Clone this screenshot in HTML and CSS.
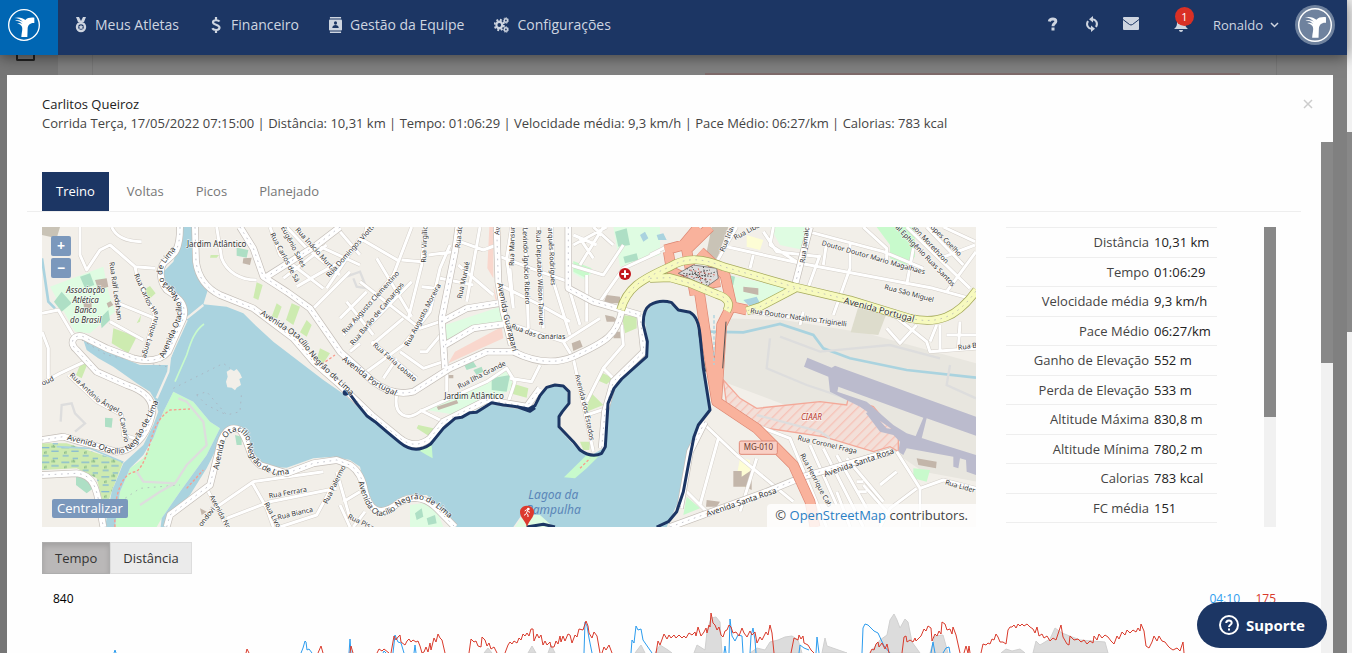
FILE: index.html
```html
<!DOCTYPE html>
<html lang="pt-BR">
<head>
  <meta charset="UTF-8" />
  <meta name="viewport" content="width=device-width, initial-scale=1.0" />
  <title>Treino - Carlitos Queiroz</title>
  <link rel="stylesheet" href="styles.css">
</head>
<body>
  <svg class="defs" width="0" height="0" aria-hidden="true">
    <symbol id="logo" viewBox="0 0 96 96">
      <circle cx="48" cy="48" r="46" fill="none" stroke="currentColor" stroke-width="4"/>
      <path fill="currentColor" d="M40 84C41 68 46 57 40 50C36 46 31 43 26 42C33 41 38 42 43 45C37 38 31 35 21 35C29 32 38 34 45 39C38 31 30 27 19 27C33 23 44 27 52 33C58 27 66 25 79 26V42C66 41 60 48 59 58L58 84Z"/>
    </symbol>
  </svg>

  <div class="page">
    <div class="screen">
      <header class="topbar">
        <a href="#" class="brand" aria-label="Início"><svg width="32" height="32"><use href="#logo"/></svg></a>
        <nav class="menu">
          <a href="#">
            <svg width="12" height="16" viewBox="0 0 12 16"><path fill="currentColor" d="M1 0h3l2 4 2-4h3L9 5H3z"/><circle cx="6" cy="10" r="4" fill="none" stroke="currentColor" stroke-width="2.400"/><path fill="currentColor" d="M6 7.500l.8 1.700 1.900.2-1.400 1.200.4 1.900L6 11.600l-1.700.9.4-1.900-1.400-1.200 1.900-.2z"/></svg>
            Meus Atletas</a>
          <a href="#">
            <svg width="14" height="16" viewBox="0 0 14 16"><path fill="none" stroke="currentColor" stroke-width="2.200" d="M10.500 4.500C9.500 3 4 2.400 4 5.300C4 8.200 10.500 7.200 10.500 10.600C10.500 13.800 4.500 13.500 3.300 11.300M7 0v3M7 13v3"/></svg>
            Financeiro</a>
          <a href="#">
            <svg width="13" height="16" viewBox="0 0 14 16" preserveAspectRatio="none"><path fill="currentColor" d="M1 0h12v1.500H1zM1 14.500h12V16H1z"/><rect y="2.500" width="14" height="11" rx="1" fill="currentColor"/><circle cx="7" cy="6" r="1.700" fill="#1c3664"/><path fill="#1c3664" d="M3.500 11c0-4 7-4 7 0z"/></svg>
            Gestão da Equipe</a>
          <a href="#">
            <svg width="15" height="16" viewBox="0 0 17 16" preserveAspectRatio="none"><g fill="none" stroke="currentColor"><circle cx="6" cy="8" r="3.300" stroke-width="2.400"/><circle cx="6" cy="8" r="5.200" stroke-width="2" stroke-dasharray="2.100 2"/><circle cx="13.500" cy="3.500" r="1.800" stroke-width="1.600"/><circle cx="13.500" cy="3.500" r="2.900" stroke-width="1" stroke-dasharray="1.300 1.300"/><circle cx="13.500" cy="12.500" r="1.800" stroke-width="1.600"/><circle cx="13.500" cy="12.500" r="2.900" stroke-width="1" stroke-dasharray="1.300 1.300"/></g></svg>
            Configurações</a>
        </nav>
        <div class="tools">
          <button type="button" aria-label="Ajuda"><svg width="16" height="16" viewBox="0 0 16 16"><path fill="none" stroke="currentColor" stroke-width="3" d="M4.300 5.500C5 2.200 11 2.200 10.800 5.300C10.700 7.500 8 7.300 8 10.200M8 11.500v3"/></svg></button>
          <button type="button" aria-label="Atualizar"><svg width="16" height="16" viewBox="0 0 16 16"><g fill="none" stroke="currentColor" stroke-width="2"><path d="M8 3.200C11.500 3 14.500 7 12 11"/><path d="M8 12.800C4.500 13 1.500 9 4 5"/></g><path fill="currentColor" d="M9 0v6.500L5 3.200zM7 16V9.500l4 3.300z"/></svg></button>
          <button type="button" aria-label="Mensagens"><svg width="16" height="13" viewBox="0 0 16 13"><rect width="16" height="13" rx="1" fill="currentColor"/><path fill="none" stroke="#1c3664" d="M0 2.500l6.500 5q1.500 1 3 0l6.500-5"/></svg></button>
          <button type="button" class="bell" aria-label="Notificações"><svg width="14" height="16" viewBox="0 0 14 16"><path fill="currentColor" d="M7 1c3.500 0 4 2.500 4 6 0 3 1 4 3 6H0c2-2 3-3 3-6 0-3.500.5-6 4-6zM5 14h4c0 2.500-4 2.500-4 0z"/></svg><span class="badge">1</span></button>
        </div>
        <button type="button" class="user">Ronaldo <svg width="9" height="6" viewBox="0 0 9 6"><path fill="none" stroke="currentColor" stroke-width="1.500" d="M1 1l3.500 3.500L8 1"/></svg></button>
        <span class="avatar"><svg width="34" height="34"><use href="#logo"/></svg></span>
      </header>

      <main class="backdrop">
        <div class="under-sidebar"></div>
        <div class="under-card"></div>
        <section class="modal" role="dialog" aria-labelledby="athlete">
          <div class="modal-header">
            <div>
              <h1 id="athlete">Carlitos Queiroz</h1>
              <p>Corrida Terça, 17/05/2022 07:15:00 | Distância: 10,31 km | Tempo: 01:06:29 | Velocidade média: 9,3 km/h | Pace Médio: 06:27/km | Calorias: 783 kcal</p>
            </div>
            <button type="button" class="close" aria-label="Fechar"><svg width="10" height="10" viewBox="0 0 10 10"><path stroke="currentColor" stroke-width="1.500" d="M1 1l8 8M9 1L1 9"/></svg></button>
          </div>

          <div class="modal-body">
            <div class="content">
              <nav class="tabs">
                <a href="#" class="active">Treino</a>
                <a href="#">Voltas</a>
                <a href="#">Picos</a>
                <a href="#">Planejado</a>
              </nav>

              <div class="overview">
                <div class="map">
                  <svg class="map-tiles" viewBox="6 6 2802 900" preserveAspectRatio="xMidYMid slice" role="img" aria-label="Mapa do percurso">
                    <defs>
                      <pattern id="marsh" width="60" height="44" patternUnits="userSpaceOnUse">
                        <rect width="60" height="44" fill="#cdeab0"/>
                        <path stroke="#6ba8e0" stroke-width="3" d="M4 8h24M34 18h22M8 32h18M38 40h16"/>
                        <path stroke="#5c9a70" stroke-width="2" fill="none" d="M36 8v-6M40 8V0M44 8v-6M14 26v-6M18 26v-8"/>
                      </pattern>
                      <pattern id="military" width="20" height="20" patternUnits="userSpaceOnUse" patternTransform="rotate(45)">
                        <rect width="20" height="20" fill="#f3dfd8"/>
                        <path stroke="#f6c3b8" stroke-width="4" d="M2 0v20"/>
                      </pattern>
                      <g id="streets">
                        <path d="M120 6V90L140 135L180 75L210 60L245 90L285 125L345 130M285 125L290 150L320 220L345 270L308 400M235 235L345 280M210 290L310 345M215 6C230 40 270 50 305 50M6 265L55 255L105 340M6 475L60 445L135 410M6 320L25 370V460M85 450L170 530L245 570L250 630L285 640M530 6L545 100C560 140 600 165 650 165M690 6L720 90L850 190M740 6L800 70L900 150M680 155L830 60L880 20M860 190L960 40M730 160L860 60M770 185L900 110M910 330L960 270M930 380L960 355M830 60L960 120M820 250L930 140"/>
                        <path d="M500 790L560 906M510 860L640 770L850 740M635 770L680 850L700 906M560 880L690 830L890 790M720 906L830 870L890 760M890 740L930 880M910 830L960 800"/>
                        <path transform="translate(900)" d="M0 120L75 30L80 6M10 330L160 150L215 6M30 360L215 170M60 40L180 110M20 230L100 330M60 170L240 310L300 290M110 100L215 275M185 105L245 110M205 280L245 120L255 6M190 360L270 260L300 130L330 60M95 360L190 280M80 440L190 360M95 350L230 460M130 460L170 400M180 380L250 430L310 410M265 90L340 80M360 50L430 75L470 60M300 160L400 180M420 6L380 230M355 120L460 210M0 20L60 90M0 280L80 200M245 185L285 190M310 320L260 380L240 380"/>
                        <path transform="translate(900)" d="M515 6L500 100L520 250M555 6L565 310M595 6L610 310M635 6L640 170L690 330M480 95L600 140L685 170M480 180L600 240L690 290M520 300L670 350L780 280M670 350L700 400L760 680M690 120L790 150L850 60M700 60L800 6M740 150V290M790 6L720 120M720 40L760 100M780 230L850 130L960 80M600 420L575 470L510 460M845 300L850 360L790 430L830 470M790 430L740 530M740 570L800 550M170 510C160 570 200 590 240 560L440 470L500 430L525 470L505 530M240 555L310 590M320 440V500M510 130L520 250M760 6L820 60M700 30L770 60M690 200L720 300"/>
                        <path transform="translate(900)" d="M0 840L30 906M40 906L75 860"/>
                        <path transform="translate(1830)" d="M0 90L60 60M230 65L450 115L850 190L960 220M370 6L360 60L440 110M340 20L380 80L510 95M475 20L700 80L820 130M530 50L520 120M600 50V130L550 270M200 110L260 6M300 130L310 90M450 300L460 260M640 6L710 70V110M770 6L960 190M830 6L940 120M880 6L975 50M790 70L770 180M870 100L975 60M890 200L978 80M710 310L750 355L800 300M730 270L830 350L840 380L978 370M860 300L840 350M870 300V375M930 290L925 375M890 330H978M300 262L580 295M510 90L470 200"/>
                        <path transform="translate(1830)" d="M165 600L260 690M205 640L150 840M260 690L430 830M320 700L270 860M315 600L420 640L530 906M110 800L170 860M480 660L560 840M520 670L640 906M560 690L650 850M590 700L700 830M640 780L720 870M620 770H640M620 800H650M690 780L740 740M740 680L810 790V906M810 790L880 765L978 790M800 790L720 850L690 906M600 906L560 800"/>
                      </g>
                      <g id="avenues">
                        <path d="M420 6C420 80 400 90 375 110C355 130 360 170 380 195C420 220 440 240 430 280L385 380C360 410 320 410 280 400L200 370L130 335C100 325 85 355 110 375L170 440L260 480C320 500 345 530 335 570C320 640 270 680 230 680L120 650L70 635L6 645"/>
                        <path d="M465 6L468 110C475 160 500 190 540 210L640 250L760 340L820 410L900 480L1000 575L1080 640Q1125 675 1170 640L1210 590L1340 525L1460 545L1500 490"/>
                        <path d="M600 6L640 70L670 155L740 200L810 250L900 380L1000 470Q1060 515 1120 500L1230 430L1340 380L1420 380C1500 420 1560 412 1600 395C1700 350 1730 330 1745 260M900 6L830 60L680 155"/>
                        <path d="M6 750L110 745C160 750 170 790 180 850L190 906M380 906L390 870L510 780L535 680C545 620 570 600 600 615C630 650 620 690 660 720L740 745L820 715L890 705L930 720C960 740 970 770 975 800C990 860 1020 870 1060 845C1100 810 1150 810 1190 850L1245 906"/>
                        <path transform="translate(900)" d="M470 6L475 170L490 260L515 360M355 6L345 80L305 280L315 430M305 290L380 250L475 235M685 6V190L760 230L900 270M315 360L400 310L490 298M900 270L912 380L820 470L795 560L785 670"/>
                        <path transform="translate(1830)" d="M60 906L350 800L460 755L720 680M435 180L480 6M165 590L120 680L90 850"/>
                      </g>
                      <g id="yellow">
                        <path d="M1742 255C1760 190 1800 165 1890 125C1940 95 1990 100 2050 125L2260 185L2430 225L2610 280C2690 298 2750 280 2810 195M1830 160L1890 158L1950 175L2030 208C2070 220 2070 240 2060 258M2265 190L2160 245L2120 258"/>
                      </g>
                      <g id="highway">
                        <path d="M1978 200L2005 380L2030 530L2150 610L2260 720L2310 830L2325 906M2010 6L1940 75L1965 210M1875 75L1930 60L1975 6M1980 80L2055 150L2075 240L2045 300L2030 530M2075 245L2120 255M1885 80L1895 140L1980 180L2040 170"/>
                      </g>
                      <path id="l1" d="M372 400L420 290C440 230 400 190 375 170C355 130 380 110 395 90L430 40"/>
                      <path id="l2" d="M660 268L770 340L830 415L920 500L980 560"/>
                      <path id="l3" d="M80 644L170 668C230 700 270 690 300 640L345 555L370 490"/>
                      <path id="l4" d="M535 735L550 665C560 610 610 605 620 650C625 710 650 730 710 752L790 740"/>
                      <path id="l5" d="M88 452L170 530L235 565L250 625L255 680"/>
                      <path id="l6" d="M282 150L320 235L345 270L312 375L300 430"/>
                      <path id="l7" d="M905 405L1000 480L1080 520L1140 530"/>
                      <path id="l8" d="M955 770C980 870 1010 890 1060 860C1110 810 1150 810 1210 865L1260 910"/>
                      <path id="l9" d="M1412 310L1500 342L1620 342"/>
                      <path id="l10" d="M1372 175L1390 270L1430 430"/>
                      <path id="l11" d="M1605 450L1630 550L1665 720"/>
                    </defs>

                    <!-- land use -->
                    <rect x="6" y="6" width="2802" height="900" fill="#f2efe9"/>
                    <path fill="#e8e6df" d="M2050 280L2230 285L2480 325L2810 415V770L2650 740L2500 640L2050 470Z"/>
                    <path fill="#c9c3b6" d="M6 6H60L50 40L6 30ZM2015 6H2065L2030 105L2000 80Z"/>
                    <path fill="#dffce2" d="M30 185L190 125L205 200L225 260L150 325L105 320ZM1215 300L1380 245L1390 290L1300 320L1220 355ZM1160 555L1380 450L1410 430L1420 490L1250 570ZM1720 6H1860V90L1740 125ZM1600 110L1660 140L1635 165L1600 145ZM2060 150L2250 190L2150 240L2085 230ZM2190 6H2310L2290 75L2220 60ZM1110 840L1180 830L1210 906H1110ZM1425 906L1450 870L1510 870L1540 906Z"/>
                    <path fill="#c8facc" d="M400 500L460 530L510 590L540 610L500 690L420 800L365 880L350 906L225 906L240 800L270 730L310 700L340 640L370 560ZM2510 6H2625V95L2600 120L2550 100V60ZM1600 108L1655 130L1640 160L1600 140ZM2620 730L2670 735L2660 770L2620 760ZM1930 870L1940 815L1980 850Z"/>
                    <path fill="url(#marsh)" d="M6 655L80 655L250 710L215 800L195 860L170 760L110 730L6 735Z"/>
                    <path fill="#cdebb0" d="M220 310L290 335L265 385L215 355ZM310 195L330 183L347 205L325 225ZM120 420L145 410L125 460L108 450ZM650 172L668 180L655 225L640 218ZM710 235L725 245L712 280L695 275ZM755 235L780 245L760 300L738 285ZM800 285L815 300L800 335L780 322ZM840 370L870 385L850 415L828 410ZM512 90H537L530 98H510ZM290 295L303 270L300 290ZM1135 600L1180 610L1170 635L1130 610ZM1415 475L1465 490L1460 518L1410 505ZM1680 440L1720 460L1700 478L1670 465ZM1650 500L1690 540L1640 560ZM1745 270L1790 275L1790 310L1755 325ZM1620 650H1650L1648 675H1630Z"/>
                    <path fill="#aedfc5" d="M65 200L95 235L65 260L42 230ZM120 155L150 145L163 180L135 190ZM180 280L205 255L210 285L185 310ZM195 578L218 580L215 608L195 605ZM585 630L605 635V660L590 660ZM108 755L150 760L160 790L140 805L108 780ZM1355 460L1410 450L1400 500L1355 495ZM1270 415L1300 410L1310 425L1280 435ZM1300 435L1325 425L1330 440L1310 450ZM1725 20L1760 10L1770 60L1735 65ZM1750 95L1790 85L1795 105L1755 115ZM2065 150L2085 155L2080 180L2062 175ZM590 68L625 75L620 98L590 92ZM1125 865L1145 850L1150 875L1130 885ZM1160 880L1185 870L1190 895L1165 900Z"/>
                    <path fill="#f9d7cd" d="M1348 6H1360V160L1342 130ZM1225 415L1245 380L1385 305L1390 340L1300 380ZM1360 180L1375 240L1365 220Z"/>
                    <path fill="#dddccc" d="M2455 245L2540 265L2515 330L2432 322Z"/>
                    <path fill="#fdfdd5" d="M2120 30L2170 45L2160 75L2120 65ZM2100 700L2130 705V790L2085 780Z"/>
                    <path fill="url(#military)" stroke="#f3a898" stroke-width="4" d="M2050 465L2100 520L2150 550L2340 530L2420 540L2425 520L2500 545L2575 635V680L2550 665L2500 680L2350 635L2150 605L2060 540Z"/>

                    <!-- lagoon and streams -->
                    <path fill="#aad3df" d="M415 6V60L400 110L370 140L375 180L420 220L440 270L400 380L385 420L300 420L240 395L180 370L130 345L140 375L175 400L220 425L290 475L330 500L345 525L355 560L340 600L310 660L250 715L215 800L195 906H225L240 800L270 730L310 690L340 640L370 560L400 500L460 530L510 590L540 610L500 690L420 800L365 880L362 906H390L400 860L450 810L500 730L540 650L560 615L600 610L620 640L630 690L680 725L740 728L820 700L880 695L930 705L960 725L975 790L985 845L1010 868L1050 845L1100 810H1160L1200 845L1250 906H1420L1445 870L1500 870L1540 906H1880L1915 830L1930 740L1950 670L1965 620L2010 555L1995 440L1975 320L1960 270L1910 250L1880 230L1840 235L1812 270L1822 340V395L1735 470L1705 530L1700 600L1690 670L1655 690L1610 670L1555 610L1560 570L1585 530L1580 490L1540 480L1510 495L1480 550L1450 555L1350 535L1290 565L1245 580L1200 620L1170 660L1125 675L1080 655L1000 590L915 510L850 465L700 350L640 295L610 265L560 245L490 238L505 190L480 165L465 130L460 6Z"/>
                    <path fill="none" stroke="#aad3df" stroke-width="8" d="M6 100L25 230L45 250M2000 320L2110 322L2220 297L2320 330L2350 370L2430 400L2600 435L2808 458"/>
                    <path fill="none" stroke="#aad3df" stroke-width="5" d="M50 665L150 670L250 712"/>
                    <path fill="none" stroke="#f2efe9" stroke-width="7" d="M490 240L440 280M440 285L390 395L385 440L350 520"/>
                    <path fill="none" stroke="#c8facc" stroke-width="5" d="M492 297C460 320 450 360 440 390L405 470"/>
                    <path fill="#f2efe9" d="M560 440L572 433L582 438L590 432L600 445L606 458L598 462L603 480L590 488L585 496L575 488L562 487L558 470L563 455Z"/>
                    <path fill="#c8facc" d="M1130 672L1160 665L1175 660L1178 700L1160 690ZM1640 690L1680 690L1640 730L1605 760L1572 757Z"/>
                    <path class="dots" d="M400 490L550 415L570 430M470 510L500 500L560 570L600 560L605 500M470 510L500 540L560 570M125 345L200 390L380 425M240 830L300 790L420 780"/>
                    <path fill="none" stroke="#fa9a8c" stroke-width="4" stroke-dasharray="8 6" d="M225 906C220 800 250 740 290 740C340 690 320 600 390 555L450 552M440 790L490 735M1620 730L1650 700M845 418L885 390"/>
                    <path fill="none" stroke="#ddd" stroke-width="7" d="M290 740L310 770L405 775L440 720L500 660L490 590L440 530L415 520M300 840L360 800L405 775M62 590L65 540L95 535L105 565L135 595L105 620M2190 340L2180 430L2300 480L2420 520M2220 335L2340 380L2550 360L2700 400M2730 420L2720 480L2808 520M2150 570L2340 620L2370 640M905 160L960 140L980 190L950 185L940 160"/>
                    <path fill="#aad3df" d="M1800 30L1815 20L1825 40L1810 50ZM1850 30L1870 25L1880 45H1855ZM2110 225L2150 215L2160 235L2130 245Z"/>

                    <!-- buildings and aprons -->
                    <path fill="#bbbbcd" d="M2302 398L2375 428L2385 422L2808 575V632L2660 580L2655 600L2640 660L2620 650L2650 578L2395 485L2392 500L2480 530L2560 600L2600 625L2680 650L2808 690V750L2780 740L2778 705L2760 700L2755 730L2740 725V695L2600 670L2590 690L2575 680L2580 650L2560 630L2520 620L2478 565L2490 555L2540 610L2555 612L2460 545L2370 500L2365 455L2292 425Z"/>
                    <path fill="#c3b6aa" d="M2630 700L2690 710L2688 730L2635 720ZM200 235L212 228L220 240L205 248ZM165 165L200 160L205 185L175 195ZM130 232H155V250H132ZM610 100L635 98L630 120L608 115ZM1700 210L1740 215V235H1690ZM1695 270L1720 275L1740 290L1700 290ZM1595 355L1620 345L1628 365L1600 378ZM1725 320L1740 320L1742 340L1720 340ZM1190 545L1250 525L1255 535L1195 555ZM2080 738H2105V755L2135 735V795L2115 785H2080ZM2190 645L2250 700L2240 710L2185 655ZM2000 825L2040 830L2030 845H1998ZM2110 185L2155 190V210L2110 200ZM480 850L500 860L485 870ZM1225 450H1240V460H1225Z"/>

                    <!-- roads -->
                    <use href="#streets" class="street-case"/>
                    <use href="#streets" class="street-fill"/>
                    <use href="#avenues" class="avenue-case"/>
                    <use href="#avenues" class="avenue-fill"/>
                    <use href="#avenues" class="dots"/>
                    <use href="#highway" class="highway-case"/>
                    <use href="#highway" class="highway-fill"/>
                    <path fill="#ddd" stroke="#555" stroke-width="2" d="M1915 145L1960 120L2030 130L2035 160L2000 185Z"/>
                    <path fill="none" stroke="#444" stroke-width="3" stroke-dasharray="4 5" d="M1930 145L2020 155M1940 130L2010 175M1960 160L2030 140M1955 125L1990 180M1990 125L2000 180M1920 155L2010 135"/>
                    <path fill="none" stroke="#e04a3c" stroke-width="2" stroke-dasharray="6 8" d="M1925 150L2015 165M1950 135L2025 150M1975 130L1985 175"/>
                    <use href="#yellow" class="yellow-case"/>
                    <use href="#yellow" class="yellow-fill"/>
                    <use href="#yellow" class="dots"/>
                    <path fill="none" stroke="#555" stroke-width="3" d="M2058 290L2048 430M1975 320L1997 440"/>
                    <path fill="none" stroke="#aad3df" stroke-width="4" stroke-dasharray="10 6" d="M2022 270V420"/>

                    <!-- recorded track -->
                    <path class="track" d="M915 503L928 505L950 535L980 572L1005 590L1040 620L1080 653Q1125 690 1172 657L1190 635L1210 610L1245 580L1265 577L1290 563L1310 562L1355 533L1390 540L1430 545L1465 552L1485 542L1500 512L1520 487L1545 480L1570 483L1587 500V535L1567 560L1557 575V605L1600 650L1620 675Q1655 700 1685 685L1696 665L1700 600L1704 535L1722 490L1745 462L1820 395L1822 350L1810 300Q1808 255 1830 240Q1860 222 1895 233L1915 255L1950 262Q1975 275 1980 330L1990 430L2010 555L1975 600L1962 635L1945 720L1930 800L1910 860L1885 890L1850 906M1430 545L1470 559L1485 548M1460 906L1510 898L1545 906"/>
                    <circle cx="917" cy="503" r="9" fill="#1c3664"/>

                    <!-- labels -->
                    <g class="street-names">
                      <text transform="translate(208 112) rotate(82)">Rua Ralf Ledsham</text>
                      <text><textPath href="#l6">Rua Carlos Henrique Lange</textPath></text>
                      <text><textPath href="#l5">Rua Antônio Ângelo Cavario</textPath></text>
                      <text transform="translate(690 28) rotate(62)">Rua Carlos de Sá</text>
                      <text transform="translate(722 8) rotate(62)">Eugênio Sales</text>
                      <text transform="translate(765 15) rotate(48)">Rua Inácio Murta</text>
                      <text transform="translate(868 158) rotate(-48)">Rua Domingos Viotti</text>
                      <text transform="translate(915 328) rotate(-48)">Rua Augusto Clementino</text>
                      <text transform="translate(940 362) rotate(-50)">Rua Barão de Camargos</text>
                      <text transform="translate(997 362) rotate(41)">Rua Faria Lobato</text>
                      <text transform="translate(1105 365) rotate(-62)">Rua Augusto Moreira</text>
                      <text transform="translate(1158 113) rotate(-88)">Rua Virgílio</text>
                      <text transform="translate(1260 70) rotate(-84)">Rua do</text>
                      <text transform="translate(1265 222) rotate(-78)">Rua Muriaé</text>
                      <text transform="translate(1378 30) rotate(-86)">Av</text>
                      <text transform="translate(1422 123) rotate(-89)">Rua Mansur</text>
                      <text transform="translate(1448 8) rotate(88)">Levindo Ignácio Ribeiro</text>
                      <text transform="translate(1488 15) rotate(88)">Rua Deputado Wilson Tanure</text>
                      <text transform="translate(1524 8) rotate(87)">arquês Rodrigues</text>
                      <text><textPath href="#l9">Rua das Canárias</textPath></text>
                      <text transform="translate(1257 492) rotate(-27)">Rua Ilha Grande</text>
                      <text transform="translate(8 482) rotate(-25)">oud</text>
                      <text transform="translate(688 820) rotate(-10)">Rua Ferrara</text>
                      <text transform="translate(714 884) rotate(-13)">Rua Bianca</text>
                      <text transform="translate(862 838) rotate(-64)">Rua Palermo</text>
                      <text transform="translate(672 836) rotate(62)">Rua Livorno</text>
                      <text transform="translate(508 815) rotate(62)">Avenida Novara</text>
                      <text transform="translate(485 906) rotate(-52)">ondovi</text>
                      <text transform="translate(922 880) rotate(25)">Rua Pisa</text>
                      <text transform="translate(2052 82) rotate(-68)">Rua Irlanda</text>
                      <text transform="translate(2086 45) rotate(-28)">Rua Libano</text>
                      <text transform="translate(2294 115) rotate(-83)">Rua Jamaica</text>
                      <text transform="translate(2344 60) rotate(16)">Doutor Doutor Mario Magalhaes</text>
                      <text transform="translate(2532 192) rotate(15)">Rua São Miguel</text>
                      <text transform="translate(2130 264) rotate(8)">Rua Doutor Natalino Triginelli</text>
                      <text transform="translate(2565 8) rotate(46)">al Ephigênio Ruas Santos</text>
                      <text transform="translate(2615 8) rotate(47)">son Morethzon</text>
                      <text transform="translate(2670 8) rotate(45)">opes Coelho</text>
                      <text transform="translate(2755 375) rotate(-8)">Rua B</text>
                      <text transform="translate(2272 645) rotate(13)">Rua Coronel Fraga</text>
                      <text transform="translate(2280 690) rotate(62)">Rua Henrique Cab</text>
                      <text transform="translate(2714 778) rotate(16)">Rua Lider</text>
                    </g>
                    <g class="avenue-names">
                      <text><textPath href="#l1">Avenida Otacílio Negrão de Lima</textPath></text>
                      <text><textPath href="#l2">Avenida Otacílio Negrão de Lima</textPath></text>
                      <text><textPath href="#l3">Avenida Otacílio Negrão de Lima</textPath></text>
                      <text><textPath href="#l4">Avenida Otacílio Negrão de Lima</textPath></text>
                      <text><textPath href="#l7">Avenida Portugal</textPath></text>
                      <text><textPath href="#l8">Avenida Otacílio Negrão de Lima</textPath></text>
                      <text><textPath href="#l10">Avenida Guarapari</textPath></text>
                      <text class="thin"><textPath href="#l11">Avenida dos Estados</textPath></text>
                      <text class="main" transform="translate(2410 235) rotate(15)">Avenida Portugal</text>
                      <text transform="translate(2355 756) rotate(-19)">Avenida Santa Rosa</text>
                      <text transform="translate(2002 875) rotate(-19)">Avenida Santa Rosa</text>
                    </g>
                    <g class="place-names">
                      <text x="530" y="65">Jardim Atlântico</text>
                      <text x="1302" y="523">Jardim Atlântico</text>
                    </g>
                    <g class="club-name">
                      <text x="137" y="204">Associação</text>
                      <text x="137" y="234">Atlética</text>
                      <text x="137" y="264">Banco</text>
                      <text x="137" y="294">do Brasil</text>
                    </g>
                    <text x="2314" y="585" class="ciaar">CIAAR</text>
                    <g class="lake-name">
                      <text x="1540" y="822">Lagoa da</text>
                      <text x="1540" y="868">Pampulha</text>
                    </g>
                    <rect x="2098" y="648" width="114" height="40" rx="5" fill="#f9cfc4" stroke="#e08a78" stroke-width="3"/>
                    <text x="2155" y="676" class="shield">MG-010</text>

                    <circle cx="1755" cy="147" r="18" fill="#c2151b"/>
                    <path stroke="#fff" stroke-width="6" d="M1755 136v22M1744 147h22"/>
                    <!-- start marker -->
                    <path fill="#dc3a2e" d="M1461 906C1455 885 1440 878 1440 861C1440 836 1482 836 1482 861C1482 878 1467 885 1461 906Z"/>
                    <circle cx="1465" cy="852" r="4" fill="#fff"/>
                    <path fill="none" stroke="#fff" stroke-width="3" d="M1454 858L1460 854L1465 860L1470 862M1463 856L1459 865L1464 869V876M1459 866L1452 871"/>
                  </svg>
                  <div class="zoom">
                    <button type="button" aria-label="Aproximar">+</button>
                    <button type="button" aria-label="Afastar">−</button>
                  </div>
                  <button type="button" class="center">Centralizar</button>
                  <p class="credits">© <a href="#">OpenStreetMap</a> contributors.</p>
                </div>

                <div class="stats">
                  <table>
                    <tbody>
                      <tr><th scope="row">Distância</th><td>10,31 km</td></tr>
                      <tr><th scope="row">Tempo</th><td>01:06:29</td></tr>
                      <tr><th scope="row">Velocidade média</th><td>9,3 km/h</td></tr>
                      <tr><th scope="row">Pace Médio</th><td>06:27/km</td></tr>
                      <tr><th scope="row">Ganho de Elevação</th><td>552 m</td></tr>
                      <tr><th scope="row">Perda de Elevação</th><td>533 m</td></tr>
                      <tr><th scope="row">Altitude Máxima</th><td>830,8 m</td></tr>
                      <tr><th scope="row">Altitude Mínima</th><td>780,2 m</td></tr>
                      <tr><th scope="row">Calorias</th><td>783 kcal</td></tr>
                      <tr><th scope="row">FC média</th><td>151</td></tr>
                    </tbody>
                  </table>
                  <div class="scroll"><div class="thumb stats-thumb"></div></div>
                </div>
              </div>

              <div class="axis-switch">
                <button type="button" class="active">Tempo</button>
                <button type="button">Distância</button>
              </div>

              <svg class="chart" viewBox="42 590 1234 110" role="img" aria-label="Gráfico do treino">
                <path class="altitude" d="M484 653L488 648L492 653ZM528 653L532 646L536 653ZM548 653L551 645L555 653ZM635 653L641 645L645 653ZM655 653L660 645L668 650L672 653ZM694 653L697 645L705 650L707 632L711 618L716 617L720 622L722 653ZM750 653L757 648L765 650L770 642L778 640L785 637L792 636L798 640L802 653ZM822 653L825 638L827 646L847 653ZM870 653L880 640L887 635L890 620L894 614L897 620L900 628L905 619L908 622L912 642L920 653ZM930 653L935 636L943 635L948 653ZM1001 653L1006 649L1012 651L1020 649L1025 653ZM1033 653L1036 641L1040 645L1050 639L1055 628L1062 633L1080 640L1105 642L1108 653Z"/>
                <path class="pace" d="M114 653L115 650L116 653M301 653L303 648L305 641L306 642L307 650L309 649L312 653M349 653L350 639L351 653M383 653L384 651L386 653M393 653L395 635L398 642L401 643L404 653M414 653L415 645L416 653M584 653L585 622L587 626L589 638L592 653M631 653L632 640L634 643L636 626L638 630L641 629L643 640L652 653M724 653L725 646L726 653M729 653L730 619L732 636L735 641L738 635L742 636L743 653M750 653L751 636L753 628L755 640L756 653M799 653L800 645L804 648L809 650M816 653L817 637L819 653M862 653L863 628L865 624L868 625L874 631L878 633L884 646L890 653M931 653L933 642L935 653M943 653L946 648L949 647L950 653"/>
                <path class="pulse" d="M246 653L247 649L249 653M318 653L321 646L323 653M350 653L351 646L353 653M377 653L379 649L382 651L384 649L389 653M391 653L394 636L396 640L398 637L400 635L401 642L405 645L407 641L409 639L411 642L413 640L416 642L418 641L420 646L422 653L424 652L426 647L428 652L430 643L431 650L434 638L436 642L438 634L440 638L442 640L445 653M469 653L471 639L474 642L476 641L478 646L481 647L482 637L485 640L487 646L489 643L491 649L494 647L497 653M505 653L508 645L510 642L512 644L514 641L517 643L519 638L521 640L523 634L525 636L527 633L529 636L531 629L533 629L534 641L537 634L539 638L541 635L543 645L545 641L547 645L550 642L551 647L554 647L556 641L558 644L560 636L561 642L563 636L565 641L568 634L570 635L572 643L575 635L577 637L579 629L583 630L586 621L588 626L589 633L592 638L594 632L597 636L600 653M602 653L604 647L606 650L609 645L612 653M656 653L658 641L660 645L664 634L667 639L669 635L671 638L674 635L676 638L679 635L682 638L684 636L686 638L689 633L692 635L695 632L696 636L698 627L701 636L704 632L706 628L707 633L709 625L710 627L711 613L713 623L715 625L717 630L719 627L721 635L723 637L725 631L727 630L729 625L731 627L733 633L736 632L739 636L742 628L744 633L747 637L750 631L752 635L755 632L757 643L760 637L762 640L766 632L768 635L770 625L772 633L774 653M791 653L794 638L796 639L798 640L799 635L801 639L803 636L804 643L808 645L811 650L814 653M870 653L872 649L874 650L876 644L878 642L879 647L882 643L885 649L887 644L889 653M902 653L904 637L906 636L907 642L910 640L913 642L915 638L916 641L921 636L924 629L926 631L928 626L931 628L932 641L935 634L937 636L939 631L941 634L942 622L945 624L947 630L950 629L952 634L953 627L956 635L960 653M964 653L966 646L968 653L969 646L970 653M981 653L983 644L986 645L988 643L990 644L992 639L994 640L996 634L998 637L1000 642L1003 642L1006 644L1008 630L1010 627L1012 627L1014 625L1016 628L1018 624L1020 626L1022 624L1024 626L1027 624L1030 627L1033 629L1035 633L1037 627L1039 636L1042 634L1044 638L1047 636L1050 641L1053 638L1056 640L1058 634L1061 625L1063 637L1067 644L1069 645L1070 636L1074 640L1078 639L1081 642L1084 640L1087 644L1090 641L1093 643L1094 636L1097 640L1099 634L1102 638L1105 635L1108 637L1111 641L1114 644L1117 636L1119 639L1122 632L1125 635L1127 630L1130 633L1133 630L1136 632L1138 628L1140 631L1141 624L1144 631L1146 646L1149 648L1152 642L1154 636L1157 641L1159 636L1162 641L1165 642L1168 646L1170 648L1173 650L1177 648L1180 651L1183 642L1184 653"/>
                <text x="53" y="603">840</text>
                <text x="1240" y="603" text-anchor="end" class="pace-label">04:10</text>
                <text x="1276" y="603" text-anchor="end" class="pulse-label">175</text>
              </svg>
            </div>
            <div class="scroll"><div class="thumb body-thumb"></div></div>
          </div>
        </section>
      </main>
    </div>
    <div class="page-scroll"><div class="thumb page-thumb"></div></div>
  </div>

  <button type="button" class="support">
    <svg width="20" height="20" viewBox="0 0 20 20"><circle cx="10" cy="10" r="9" fill="none" stroke="currentColor" stroke-width="2"/><path fill="none" stroke="currentColor" stroke-width="2" d="M7.200 8C7.300 4.500 12.800 4.700 12.700 8C12.600 9.800 10 9.800 10 12M10 13.500v2"/></svg>
    Suporte
  </button>
</body>
</html>
```
FILE: styles.css
```css
* {
  box-sizing: border-box;
}
body {
  margin: 0;
  font-family: "Open Sans", "Noto Sans", sans-serif;
  font-size: 13px;
  line-height: 20px;
  color: #444;
  background: #808080;
}
button {
  font: inherit;
  border: 0;
  padding: 0;
  background: none;
  color: inherit;
  cursor: pointer;
}
a {
  text-decoration: none;
}
svg {
  display: block;
}
.defs {
  position: absolute;
}
.page {
  display: flex;
  height: 100vh;
  overflow: hidden;
}
.screen {
  flex: 1;
  min-width: 0;
  display: flex;
  flex-direction: column;
}

/* top bar */
.topbar {
  display: flex;
  align-items: center;
  flex: none;
  height: 55px;
  padding-right: 12px;
  background: #1c3664;
  color: #ced5e0;
  box-shadow: 0 2px 14px rgba(0,0,0,0.5);
  position: relative;
  z-index: 2;
}
.brand {
  width: 58px;
  height: 55px;
  padding: 9px 8px;
  background: #0066b3;
  color: #fff;
}
.menu {
  display: flex;
  gap: 30px;
  margin: 0 auto 6px 17px;
  font-size: 14px;
}
.menu a {
  display: flex;
  align-items: center;
  gap: 8px;
  color: inherit;
}
.tools {
  display: flex;
  align-items: center;
  gap: 23px;
  margin: 0 25px 8px 0;
}
.bell {
  position: relative;
  margin-left: 12px;
}
.badge {
  position: absolute;
  left: 1px;
  top: -9px;
  width: 19px;
  height: 19px;
  border-radius: 50%;
  background: #d93025;
  color: #fff;
  font-size: 11px;
  line-height: 19px;
}
.user {
  display: flex;
  align-items: center;
  gap: 7px;
  margin: 0 16px 6px 0;
}
.avatar {
  width: 40px;
  height: 40px;
  margin-bottom: 5px;
  padding: 3px;
  border-radius: 50%;
  background: #6f829e;
  color: #fff;
}

/* dimmed page under the dialog */
.backdrop {
  flex: 1;
  min-height: 0;
  display: flex;
  padding: 20px 14px 0 7px;
  position: relative;
}
.under-sidebar {
  position: absolute;
  left: 0;
  top: 0;
  bottom: 0;
  width: 58px;
  background: #767676;
}
.under-sidebar::before {
  content: "";
  display: block;
  width: 15px;
  height: 4px;
  margin-left: 16px;
  border: 2px solid #222;
  border-top: 0;
  border-radius: 0 0 2px 2px;
}
.under-card {
  position: absolute;
  left: 92px;
  right: 70px;
  top: 0;
  height: 20px;
  padding: 18px 36px 0 612px;
  border: solid #777;
  border-width: 0 1px;
}
.under-card::before {
  content: "";
  display: block;
  height: 2px;
  background: #7e6a6a;
}

/* dialog */
.modal {
  flex: 1;
  min-width: 0;
  display: flex;
  flex-direction: column;
  background: #fefefe;
  position: relative;
}
.modal-header {
  display: flex;
  justify-content: space-between;
  align-items: flex-start;
  flex: none;
  height: 67px;
  padding: 20px 20px 0 35px;
  line-height: 19px;
}
.modal-header h1 {
  margin: 0;
  font-size: 13px;
  font-weight: 500;
  color: #222;
}
.modal-header p {
  margin: 0;
  white-space: nowrap;
}
.close {
  margin-top: 4px;
  color: #ccc;
}
.modal-body {
  flex: 1;
  min-height: 0;
  display: flex;
}
.content {
  flex: 1;
  min-width: 0;
  padding: 30px 20px 0;
  overflow: hidden;
}
.scroll {
  width: 12px;
  background: #f1f1f1;
}
.thumb {
  background: #888;
}
.body-thumb {
  height: 221px;
}
.stats-thumb {
  height: 190px;
}
.page-scroll {
  width: 5px;
  padding-top: 132px;
  background: #f1f1f1;
}
.page-thumb {
  height: 200px;
}
.tabs {
  display: flex;
  gap: 4px;
  padding: 0 15px;
  border-bottom: 1px solid #eee;
}
.tabs a {
  padding: 9px 14px 10px;
  color: #777;
}
.tabs .active {
  background: #1c3664;
  color: #fff;
}
.overview {
  display: flex;
  gap: 30px;
  height: 300px;
  margin: 15px 25px 0 15px;
}

/* map */
.map {
  flex: 1;
  min-width: 0;
  position: relative;
  overflow: hidden;
}
.map-tiles {
  width: 100%;
  height: 100%;
  font-family: "Noto Sans", sans-serif;
}
.map-tiles use {
  fill: none;
  stroke-linejoin: round;
}
.street-case { stroke: #d5d0ca; stroke-width: 12px; }
.street-fill { stroke: #fff; stroke-width: 9px; }
.avenue-case { stroke: #c4beb8; stroke-width: 22px; }
.avenue-fill { stroke: #fff; stroke-width: 18px; }
.yellow-case { stroke: #a5a95c; stroke-width: 26px; }
.yellow-fill { stroke: #f7fabf; stroke-width: 22px; }
.highway-case { stroke: #dd8672; stroke-width: 32px; }
.highway-fill { stroke: #f9b29c; stroke-width: 28px; }
.dots {
  fill: none;
  stroke: #a9a9b5;
  stroke-width: 2px;
  stroke-dasharray: 5 14;
}
.track {
  fill: none;
  stroke: #1c3664;
  stroke-width: 9px;
  stroke-linejoin: round;
}
.map-tiles text {
  fill: #333;
  stroke: #fff;
  stroke-width: 4px;
  stroke-opacity: 0.7;
  paint-order: stroke;
}
.street-names { font-size: 21px; }
.avenue-names { font-size: 24px; }
.avenue-names .thin { font-size: 21px; }
.avenue-names .main { font-size: 27px; }
.place-names,
.club-name,
.lake-name,
.shield,
.ciaar {
  font-size: 24px;
  text-anchor: middle;
}
.club-name,
.lake-name,
.ciaar {
  font-style: italic;
}
.map-tiles .lake-name { font-size: 36px; }
.map-tiles .lake-name text { fill: #5a86b8; stroke: none; }
.map-tiles .shield { fill: #6b3a30; stroke: none; }
.map-tiles .ciaar { fill: #b8392c; }
.zoom {
  position: absolute;
  left: 9px;
  top: 9px;
  display: grid;
  gap: 2px;
}
.zoom button {
  width: 20px;
  height: 20px;
  border-radius: 2px;
  background: #7b98bc;
  color: #fff;
  font-size: 14px;
  font-weight: 700;
  line-height: 20px;
}
.center {
  position: absolute;
  left: 10px;
  bottom: 9px;
  padding: 0 5px;
  border-radius: 2px;
  background: #7b98bc;
  color: #fff;
  line-height: 19px;
}
.credits {
  position: absolute;
  right: 0;
  bottom: 0;
  margin: 0;
  padding: 1px 8px 2px;
  border-radius: 4px 0 0;
  background: rgba(255,255,255,0.8);
}
.credits a {
  color: #2a80c5;
}

/* figures beside the map */
.stats {
  display: flex;
  justify-content: space-between;
  width: 270px;
}
.stats table {
  width: 211px;
  height: 296px;
  border-collapse: collapse;
  border-bottom: 1px solid #eee;
}
.stats th,
.stats td {
  padding: 0;
  border-top: 1px solid #eee;
}
.stats th {
  width: 143px;
  font-weight: 400;
  text-align: right;
}
.stats td {
  padding-left: 5px;
  font-weight: 500;
  color: #222;
}

/* chart */
.axis-switch {
  display: flex;
  margin: 15px 15px 0;
}
.axis-switch button {
  padding: 5px 12px;
  border: 1px solid #ddd;
  background: #ebebeb;
  color: #333;
}
.axis-switch .active {
  border-color: #adadad;
  background: #bab8b8;
  box-shadow: inset 0 3px 5px rgba(0,0,0,0.125);
}
.chart {
  width: calc(100% - 40px);
  margin: 16px 25px 0 15px;
  font-size: 12px;
}
.chart path {
  fill: none;
  stroke-width: 1px;
}
.chart .altitude { fill: #dcdcdc; stroke: #d0d0d0; }
.chart .pace { stroke: #2c9cee; }
.chart .pulse { stroke: #d93a2b; }
.pace-label { fill: #2c9cee; }
.pulse-label { fill: #d93a2b; }

.support {
  position: fixed;
  right: 25px;
  bottom: 5px;
  display: flex;
  align-items: center;
  gap: 7px;
  height: 46px;
  padding: 0 22px;
  border-radius: 23px;
  background: #1c3664;
  color: #fff;
  font-family: "Noto Sans", sans-serif;
  font-size: 15px;
  font-weight: 700;
}
```
